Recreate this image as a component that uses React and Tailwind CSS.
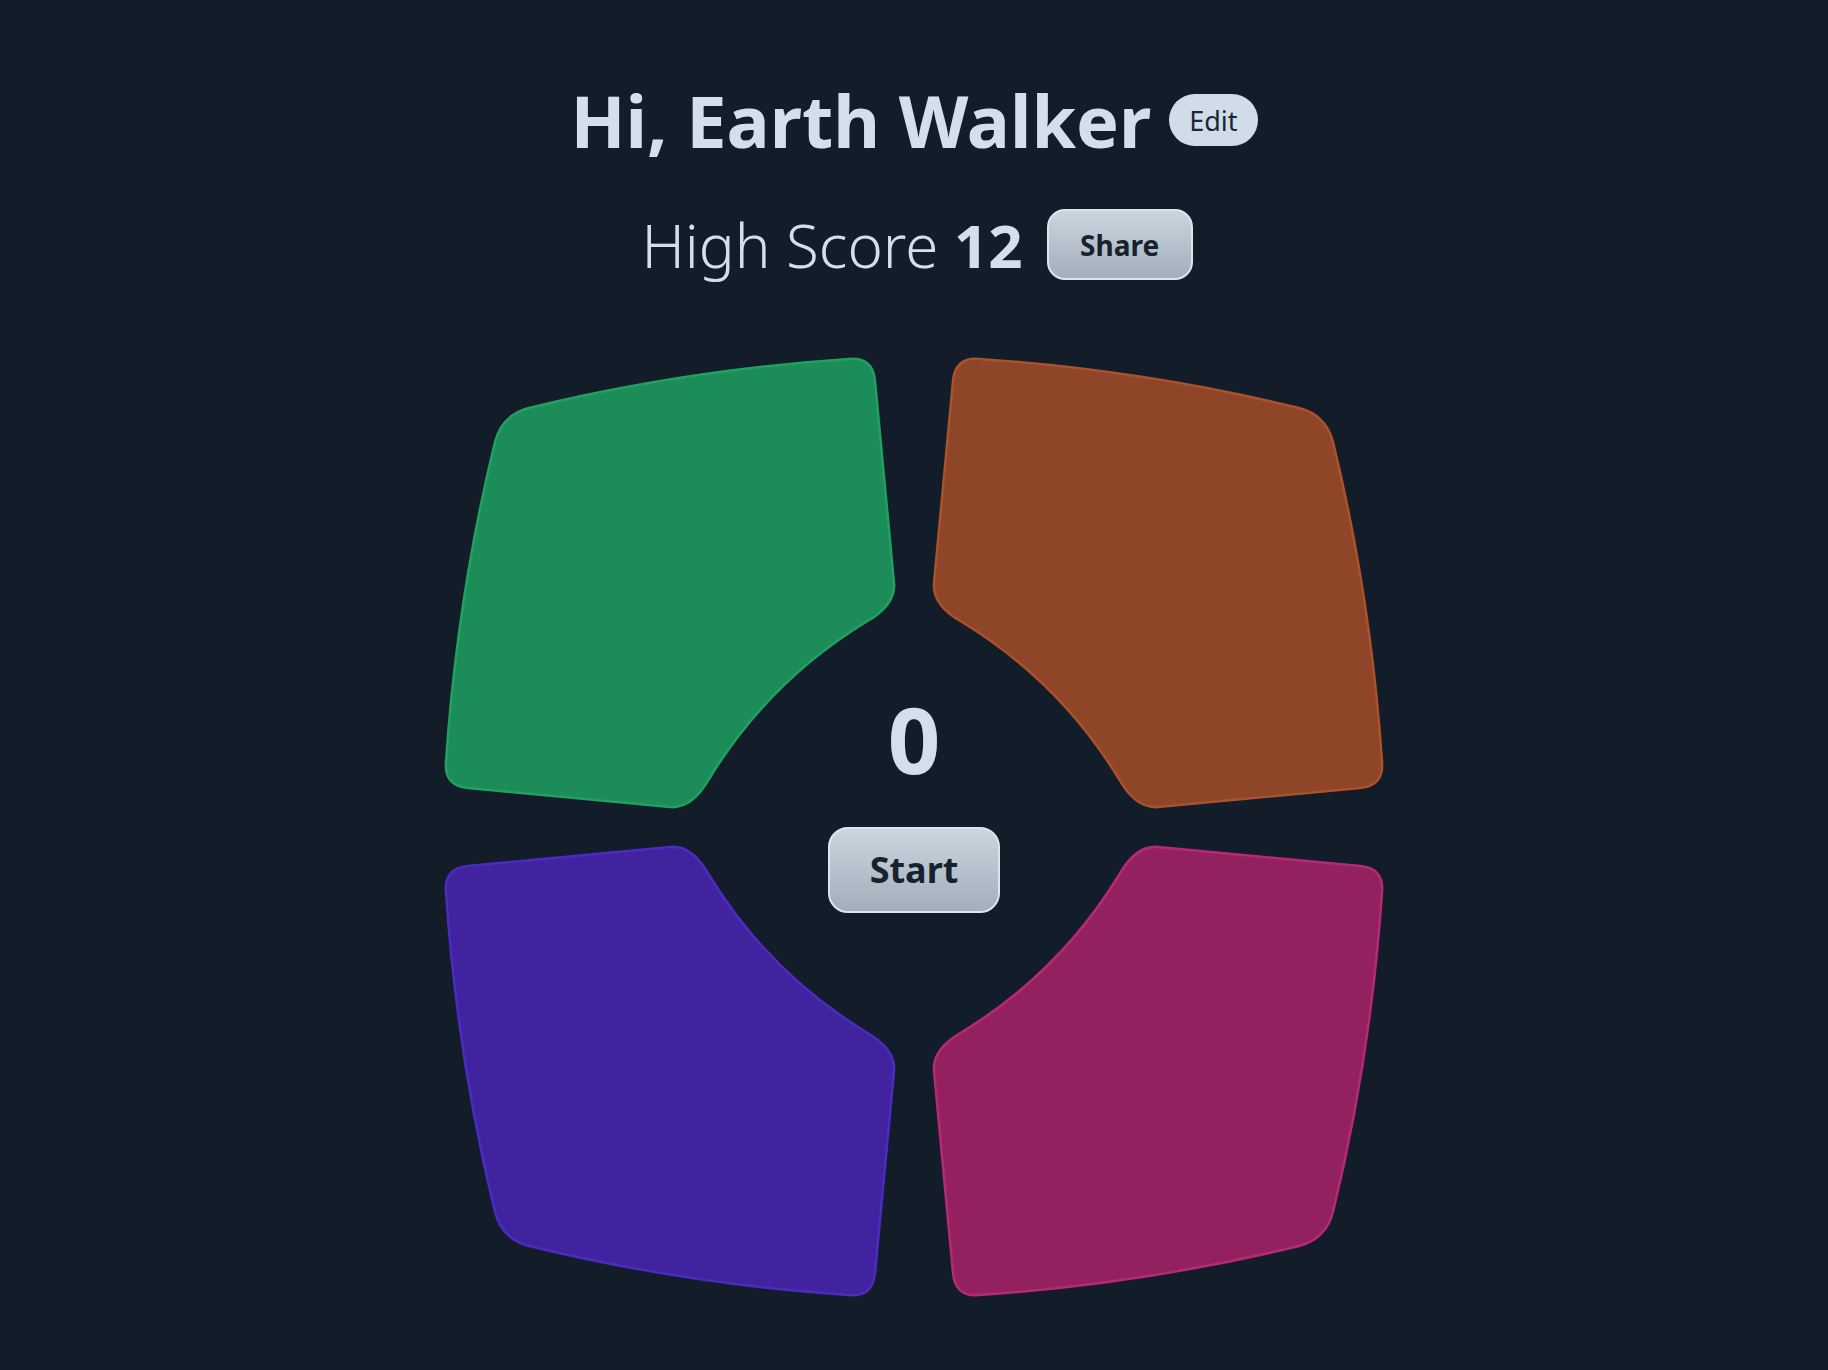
const PAD_PATH =
  'M -385 -419 Q -229 -457 -65 -468 Q -41 -470 -39 -446 L -20 -244 Q -18 -222 -48 -205 Q -145.5 -145.5 -205 -48 Q -222 -18 -244 -20 L -446 -39 Q -470 -41 -468 -65 Q -457 -229 -419 -385 Q -412 -412 -385 -419 Z';

const pads = [
  { key: 'green', fill: '#1c8c58', stroke: '#22a062', t: 'scale(1,1)' },
  { key: 'orange', fill: '#8f4528', stroke: '#a9522c', t: 'scale(-1,1)' },
  { key: 'purple', fill: '#41229f', stroke: '#4b2cc0', t: 'scale(1,-1)' },
  { key: 'pink', fill: '#93215f', stroke: '#b52a76', t: 'scale(-1,-1)' },
];

function Board() {
  return (
    <svg width="944" height="940" viewBox="-472 -470 944 940" className="block">
      {pads.map((p) => (
        <path key={p.key} d={PAD_PATH} transform={p.t} fill={p.fill} stroke={p.stroke} strokeWidth="2.5" />
      ))}
    </svg>
  );
}

export default function App() {
  return (
    <div
      className="min-h-screen bg-[#131d29] flex flex-col items-center pt-[82px] text-[#d3e0ec]"
      style={{ fontFamily: '"Noto Sans", "Open Sans", sans-serif' }}
    >
      <div className="flex items-center gap-[18px] h-[76px]">
        <h1 className="text-[72px] leading-none font-bold">Hi, Earth Walker</h1>
        <button className="h-[52px] px-[20px] rounded-full bg-[#d0dde9] text-[#1c2633] text-[27px] leading-none">
          Edit
        </button>
      </div>

      <div className="flex items-center gap-[24px] mt-[51px] h-[71px] pl-[6px]">
        <div className="text-[60px] leading-none font-light">
          High Score <span className="font-bold">12</span>
        </div>
        <button className="w-[146px] h-[71px] rounded-[18px] border-2 border-[#dde5ec] bg-gradient-to-b from-[#cad5df] to-[#a2afba] text-[#18222e] text-[28px] font-bold leading-none">
          Share
        </button>
      </div>

      <div className="relative mt-[77px]">
        <Board />
        <div className="absolute inset-0 flex flex-col items-center justify-center pb-[48px]">
          <div className="text-[92px] leading-none font-bold">0</div>
          <button className="mt-[42px] w-[172px] h-[86px] rounded-[20px] border-2 border-[#dde5ec] bg-gradient-to-b from-[#cad5df] to-[#a2afba] text-[#18222e] text-[36px] font-bold leading-none">
            Start
          </button>
        </div>
      </div>
    </div>
  );
}
